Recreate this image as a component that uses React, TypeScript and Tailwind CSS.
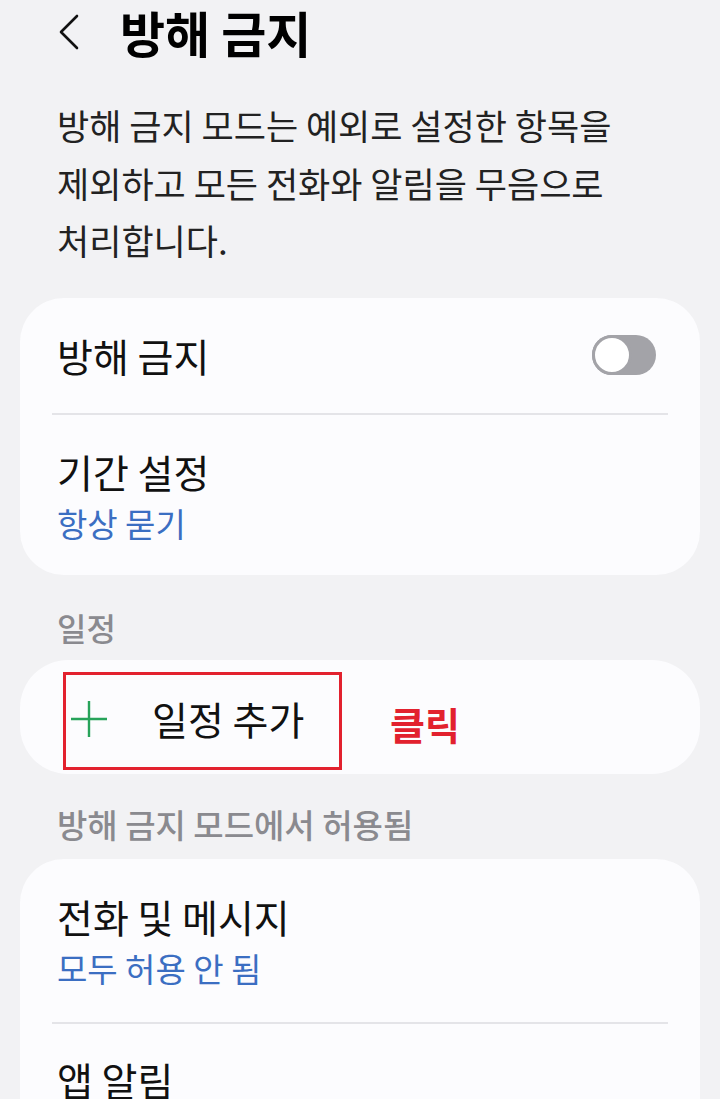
import React from "react";

const font = { fontFamily: '"Noto Sans CJK KR", "Noto Sans", sans-serif' };

function Toggle() {
  return (
    <div className="flex h-[40px] w-[64px] items-center rounded-full bg-[#a3a3a8]">
      <div className="h-[40px] w-[40px] rounded-full border-[3px] border-[#a3a3a8] bg-white" />
    </div>
  );
}

function TwoLineRow({ title, sub, h }: { title: string; sub: string; h: string }) {
  return (
    <div className={`flex flex-col justify-center pl-[37px] ${h}`}>
      <div className="text-[39px] leading-[48px] text-[#111]">{title}</div>
      <div className="mt-[8px] text-[33px] leading-[40px] text-[#3b6ec2]">{sub}</div>
    </div>
  );
}

function Divider() {
  return <div className="mx-[32px] h-[2px] bg-[#e4e4e8]" />;
}

export default function App() {
  return (
    <div className="h-[1099px] w-[720px] overflow-hidden bg-[#f2f2f4]" style={font}>
      <div className="flex h-[64px] items-center pl-[58px]">
        <svg width="22" height="36" viewBox="0 0 22 36" fill="none">
          <path d="M19 2 L3 18 L19 34" stroke="#111" strokeWidth="2.6" strokeLinecap="round" strokeLinejoin="round" />
        </svg>
        <h1 className="ml-[40px] text-[49px] font-bold leading-[1.3] text-black">방해 금지</h1>
      </div>

      <p className="mt-[32px] px-[57px] text-[35px] leading-[57.5px] text-[#222]">
        방해 금지 모드는 예외로 설정한 항목을
        <br />
        제외하고 모든 전화와 알림을 무음으로
        <br />
        처리합니다.
      </p>

      <div className="mx-[20px] mt-[29px] rounded-[44px] bg-[#fcfcfe]">
        <div className="flex h-[115px] items-center justify-between pl-[37px] pr-[44px]">
          <span className="text-[39px] leading-[48px] text-[#111]">방해 금지</span>
          <Toggle />
        </div>
        <Divider />
        <TwoLineRow title="기간 설정" sub="항상 묻기" h="h-[160px]" />
      </div>

      <div className="pl-[57px] pt-[32px] pb-[13px] text-[32px] font-medium leading-[40px] text-[#8a8a8f]">
        일정
      </div>

      <div className="mx-[20px] flex h-[114px] items-start rounded-[48px] bg-[#fcfcfe] pl-[43px] pt-[12px]">
        <div className="flex h-[98px] w-[279px] items-center border-[3px] border-[#e2212e] pl-[4px]">
          <svg width="38" height="38" viewBox="0 0 38 38" className="mt-[-4px]">
            <path d="M19 1 V37 M1 19 H37" stroke="#27a35a" strokeWidth="2.4" />
          </svg>
          <span className="ml-[44px] mt-[-6px] text-[39px] leading-[48px] text-[#111]">일정 추가</span>
        </div>
        <span className="ml-[48px] mt-[28px] text-[38px] font-bold leading-[48px] text-[#e2212e]">클릭</span>
      </div>

      <div className="pl-[57px] pt-[30px] pb-[15px] text-[33px] font-medium leading-[40px] text-[#8a8a8f]">
        방해 금지 모드에서 허용됨
      </div>

      <div className="mx-[20px] rounded-[44px] bg-[#fcfcfe] pb-[80px]">
        <TwoLineRow title="전화 및 메시지" sub="모두 허용 안 됨" h="h-[163px]" />
        <Divider />
        <div className="pl-[37px] pt-[31px] text-[39px] leading-[48px] text-[#111]">앱 알림</div>
      </div>
    </div>
  );
}
